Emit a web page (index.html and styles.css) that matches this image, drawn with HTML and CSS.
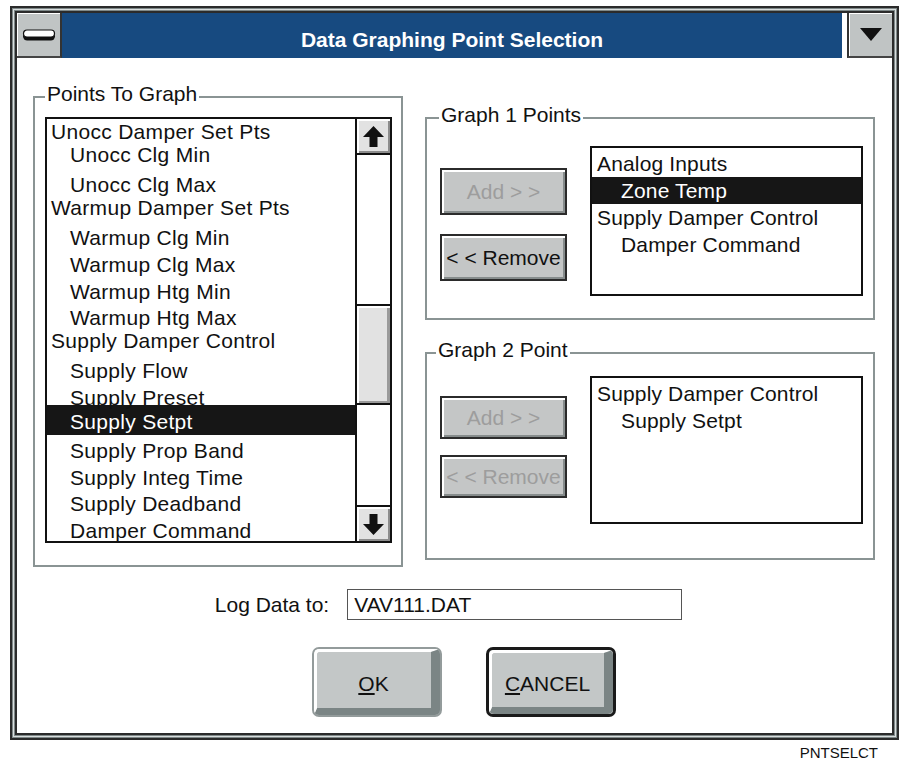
FILE: index.html
```html
<!DOCTYPE html>
<html lang="en">
<head>
    <meta charset="UTF-8">
    <title>Data Graphing Point Selection</title>
    <link rel="stylesheet" href="styles.css">
</head>
<body>
    <div class="frame">
        <div class="window">
            <div class="titlebar">
                <div class="sysbtn">
                    <svg width="34" height="12" viewBox="0 0 34 12">
                        <rect x="1" y="3" width="32" height="8.5" rx="4.2" fill="#111"/>
                        <rect x="1.5" y="1" width="31" height="7" rx="3.5" fill="#fff" stroke="#111" stroke-width="1.2"/>
                    </svg>
                </div>
                <div class="caption">Data Graphing Point Selection</div>
                <div class="dropbtn">
                    <svg width="22" height="13" viewBox="0 0 22 13"><polygon points="0,0 22,0 11,13" fill="#111"/></svg>
                </div>
            </div>

            <div class="groups">
                <fieldset class="group group-points">
                    <legend>Points To Graph</legend>
                    <div class="listbox listbox-points">
                        <ul class="items items-points">
                            <li>Unocc Damper Set Pts</li>
                            <li class="sub lift">Unocc Clg Min</li>
                            <li class="sub">Unocc Clg Max</li>
                            <li class="lift">Warmup Damper Set Pts</li>
                            <li class="sub">Warmup Clg Min</li>
                            <li class="sub">Warmup Clg Max</li>
                            <li class="sub">Warmup Htg Min</li>
                            <li class="sub">Warmup Htg Max</li>
                            <li class="lift">Supply Damper Control</li>
                            <li class="sub">Supply Flow</li>
                            <li class="sub">Supply Preset</li>
                            <li class="sub sel">Supply Setpt</li>
                            <li class="sub">Supply Prop Band</li>
                            <li class="sub">Supply Integ Time</li>
                            <li class="sub">Supply Deadband</li>
                            <li class="sub">Damper Command</li>
                        </ul>
                        <div class="scrollbar">
                            <div class="sb-btn">
                                <svg width="21" height="21" viewBox="0 0 21 21"><polygon points="10.5,0 21,11 14.5,11 14.5,21 6.5,21 6.5,11 0,11" fill="#111"/></svg>
                            </div>
                            <div class="sb-track"><div class="sb-thumb"></div></div>
                            <div class="sb-btn sb-btn-down">
                                <svg width="21" height="21" viewBox="0 0 21 21"><polygon points="6.5,0 14.5,0 14.5,10 21,10 10.5,21 0,10 6.5,10" fill="#111"/></svg>
                            </div>
                        </div>
                    </div>
                </fieldset>

                <div class="graphs">
                    <fieldset class="group group-g1">
                        <legend>Graph 1 Points</legend>
                        <div class="pick">
                            <div class="pick-btns">
                                <button class="btn" disabled>Add &gt; &gt;</button>
                                <button class="btn">&lt; &lt; Remove</button>
                            </div>
                            <div class="listbox listbox-graph">
                                <ul class="items items-graph">
                                    <li>Analog Inputs</li>
                                    <li class="sub sel">Zone Temp</li>
                                    <li>Supply Damper Control</li>
                                    <li class="sub">Damper Command</li>
                                </ul>
                            </div>
                        </div>
                    </fieldset>

                    <fieldset class="group group-g2">
                        <legend>Graph 2 Point</legend>
                        <div class="pick">
                            <div class="pick-btns">
                                <button class="btn" disabled>Add &gt; &gt;</button>
                                <button class="btn" disabled>&lt; &lt; Remove</button>
                            </div>
                            <div class="listbox listbox-graph">
                                <ul class="items items-graph">
                                    <li>Supply Damper Control</li>
                                    <li class="sub">Supply Setpt</li>
                                </ul>
                            </div>
                        </div>
                    </fieldset>
                </div>
            </div>

            <div class="logrow">
                <label for="logfile">Log Data to:</label>
                <input class="logfield" id="logfile" type="text" value="VAV111.DAT">
            </div>

            <div class="keys">
                <button class="key"><span class="key-face"><u>O</u>K</span></button>
                <button class="key key-default"><span class="key-face"><u>C</u>ANCEL</span></button>
            </div>
        </div>
    </div>
    <div class="figcode">PNTSELCT</div>
</body>
</html>
```

FILE: styles.css
```css
body {
    margin: 0;
    height: 761px;
    overflow: hidden;
    font-family: "Liberation Sans", Arial, sans-serif;
    color: #111;
    background: #fff;
}
.frame {
    margin: 6px 0 0 10px;
    width: 889px;
    height: 734px;
    box-sizing: border-box;
    border: 2px solid #2b2b2b;
    padding: 3px;
    background: #7f8989;
    box-shadow: inset 0 0 0 1px #7f8989, inset 0 0 0 2px #dadede;
}
.window {
    height: 100%;
    box-sizing: border-box;
    border: 2px solid #2b2b2b;
    background: #fff;
}

/* title bar */
.titlebar {
    display: flex;
    height: 45px;
}
.sysbtn, .dropbtn {
    width: 45px;
    flex: none;
    box-sizing: border-box;
    background: #c0c4c4;
    border-bottom: 2px solid #444;
    box-shadow: inset 1px 1px 0 #fff;
    display: flex;
    align-items: center;
    justify-content: center;
}
.sysbtn {
    border-right: 2px solid #333;
}
.dropbtn {
    border-left: 2px solid #333;
}
.caption {
    flex: 1;
    margin-right: 5px;
    padding-top: 9px;
    background: #174a80;
    color: #fff;
    font-weight: bold;
    font-size: 21px;
    line-height: 36px;
    text-align: center;
}

/* group boxes */
.groups {
    display: grid;
    grid-template-columns: 370px 450px;
    column-gap: 22px;
    align-items: start;
    padding-left: 16px;
}
.group {
    margin: 0;
    min-width: 0;
    border: 2px solid #8a9494;
    padding: 0 0 0 10px;
    box-sizing: border-box;
}
.group legend {
    padding: 0 2px 6px;
    font-size: 21px;
    line-height: 22px;
}
.group-points {
    margin-top: 25px;
    height: 484px;
}
.graphs {
    display: flex;
    flex-direction: column;
}
.group-g1 {
    margin-top: 46px;
    height: 216px;
    padding-left: 12px;
}
.group-g2 {
    margin-top: 19px;
    height: 221px;
    padding-left: 12px;
}
.group-g2 legend {
    margin-left: -3px;
}

/* list boxes */
.listbox {
    border: 2px solid #111;
    box-sizing: border-box;
    background: #fff;
    overflow: hidden;
}
.listbox-points {
    display: flex;
    width: 347px;
    height: 426px;
    margin-top: 6px;
}
.items {
    list-style: none;
    margin: 0;
    padding: 0;
    font-size: 21px;
    letter-spacing: 0.15px;
    white-space: nowrap;
}
.items .sel {
    background: #161616;
    color: #fff;
}
.items-points {
    flex: 1;
    min-width: 0;
    line-height: 26.6px;
    letter-spacing: 0.3px;
}
.items-points li {
    padding-left: 4px;
}
.items-points li.sub {
    padding-left: 23px;
}
.items-points li.lift {
    margin: -4px 0 4px;
}
.items-points li.sel {
    margin: -7px 0 3px;
    padding-top: 4px;
}
.items-graph {
    padding-top: 2px;
    line-height: 27px;
}
.items-graph li {
    padding-left: 5px;
}
.items-graph li.sub {
    padding-left: 29px;
}

/* scroll bar */
.scrollbar {
    width: 35px;
    flex: none;
    box-sizing: border-box;
    border-left: 2px solid #111;
    display: flex;
    flex-direction: column;
}
.sb-btn {
    height: 36px;
    flex: none;
    box-sizing: border-box;
    background: #e2e2e2;
    border-bottom: 2px solid #111;
    box-shadow: inset 2px 2px 0 #fff, inset -2px -2px 0 #8c8c8c;
    display: flex;
    align-items: center;
    justify-content: center;
}
.sb-btn-down {
    border-bottom: 0;
    border-top: 2px solid #111;
}
.sb-track {
    flex: 1;
}
.sb-thumb {
    margin-top: 149px;
    height: 101px;
    box-sizing: border-box;
    border-top: 2px solid #111;
    border-bottom: 2px solid #111;
    background: #e2e2e2;
    box-shadow: inset 2px 2px 0 #fff, inset -3px -2px 0 #9a9a9a;
}

/* add / remove */
.pick {
    display: flex;
    align-items: flex-start;
}
.pick-btns {
    display: flex;
    flex-direction: column;
    gap: 19px;
    margin: 36px 0 0 1px;
}
.btn {
    width: 127px;
    height: 47px;
    padding: 0;
    border: 2px solid #2b2b2b;
    background: #c4c6c6;
    box-shadow: inset 2px 2px 0 #fff, inset -2px -2px 0 #868c8c;
    font-family: "Liberation Sans", Arial, sans-serif;
    font-size: 21px;
    color: #111;
}
.btn:disabled {
    color: #9d9d9d;
}
.listbox-graph {
    width: 273px;
    height: 150px;
    margin: 14px 0 0 23px;
}
.group-g2 .pick-btns {
    gap: 16px;
    margin-top: 29px;
}
.group-g2 .btn {
    height: 43px;
}
.group-g2 .listbox-graph {
    height: 148px;
    margin-top: 9px;
}

/* log file + dialog keys */
.logrow {
    display: flex;
    align-items: center;
    justify-content: center;
    gap: 18px;
    margin-top: 22px;
    padding-right: 12px;
    font-size: 21px;
}
.logfield {
    width: 335px;
    height: 31px;
    box-sizing: border-box;
    border: 1.5px solid #555;
    padding: 0 6px;
    font-family: "Liberation Sans", Arial, sans-serif;
    font-size: 21px;
    color: #111;
}
.keys {
    display: flex;
    justify-content: center;
    gap: 44px;
    margin-top: 27px;
    padding-left: 18px;
}
.key {
    display: flex;
    width: 130px;
    height: 70px;
    padding: 0;
    box-sizing: border-box;
    border: 2px solid #939b9b;
    border-radius: 7px;
    background: #c3c7c7;
    font-family: "Liberation Sans", Arial, sans-serif;
    font-size: 21px;
    color: #111;
}
.key-default {
    border: 3px solid #1a1a1a;
}
.key-face {
    flex: 1;
    display: flex;
    align-items: center;
    justify-content: center;
    box-sizing: border-box;
    padding-top: 8px;
    border-style: solid;
    border-width: 3px 9px 7px 3px;
    border-color: #fff #7b8585 #7b8585 #fff;
    border-radius: 5px;
}

.figcode {
    width: 889px;
    margin: 4px 0 0 10px;
    box-sizing: border-box;
    padding-right: 21px;
    text-align: right;
    font-size: 15px;
    line-height: 17px;
}
```
